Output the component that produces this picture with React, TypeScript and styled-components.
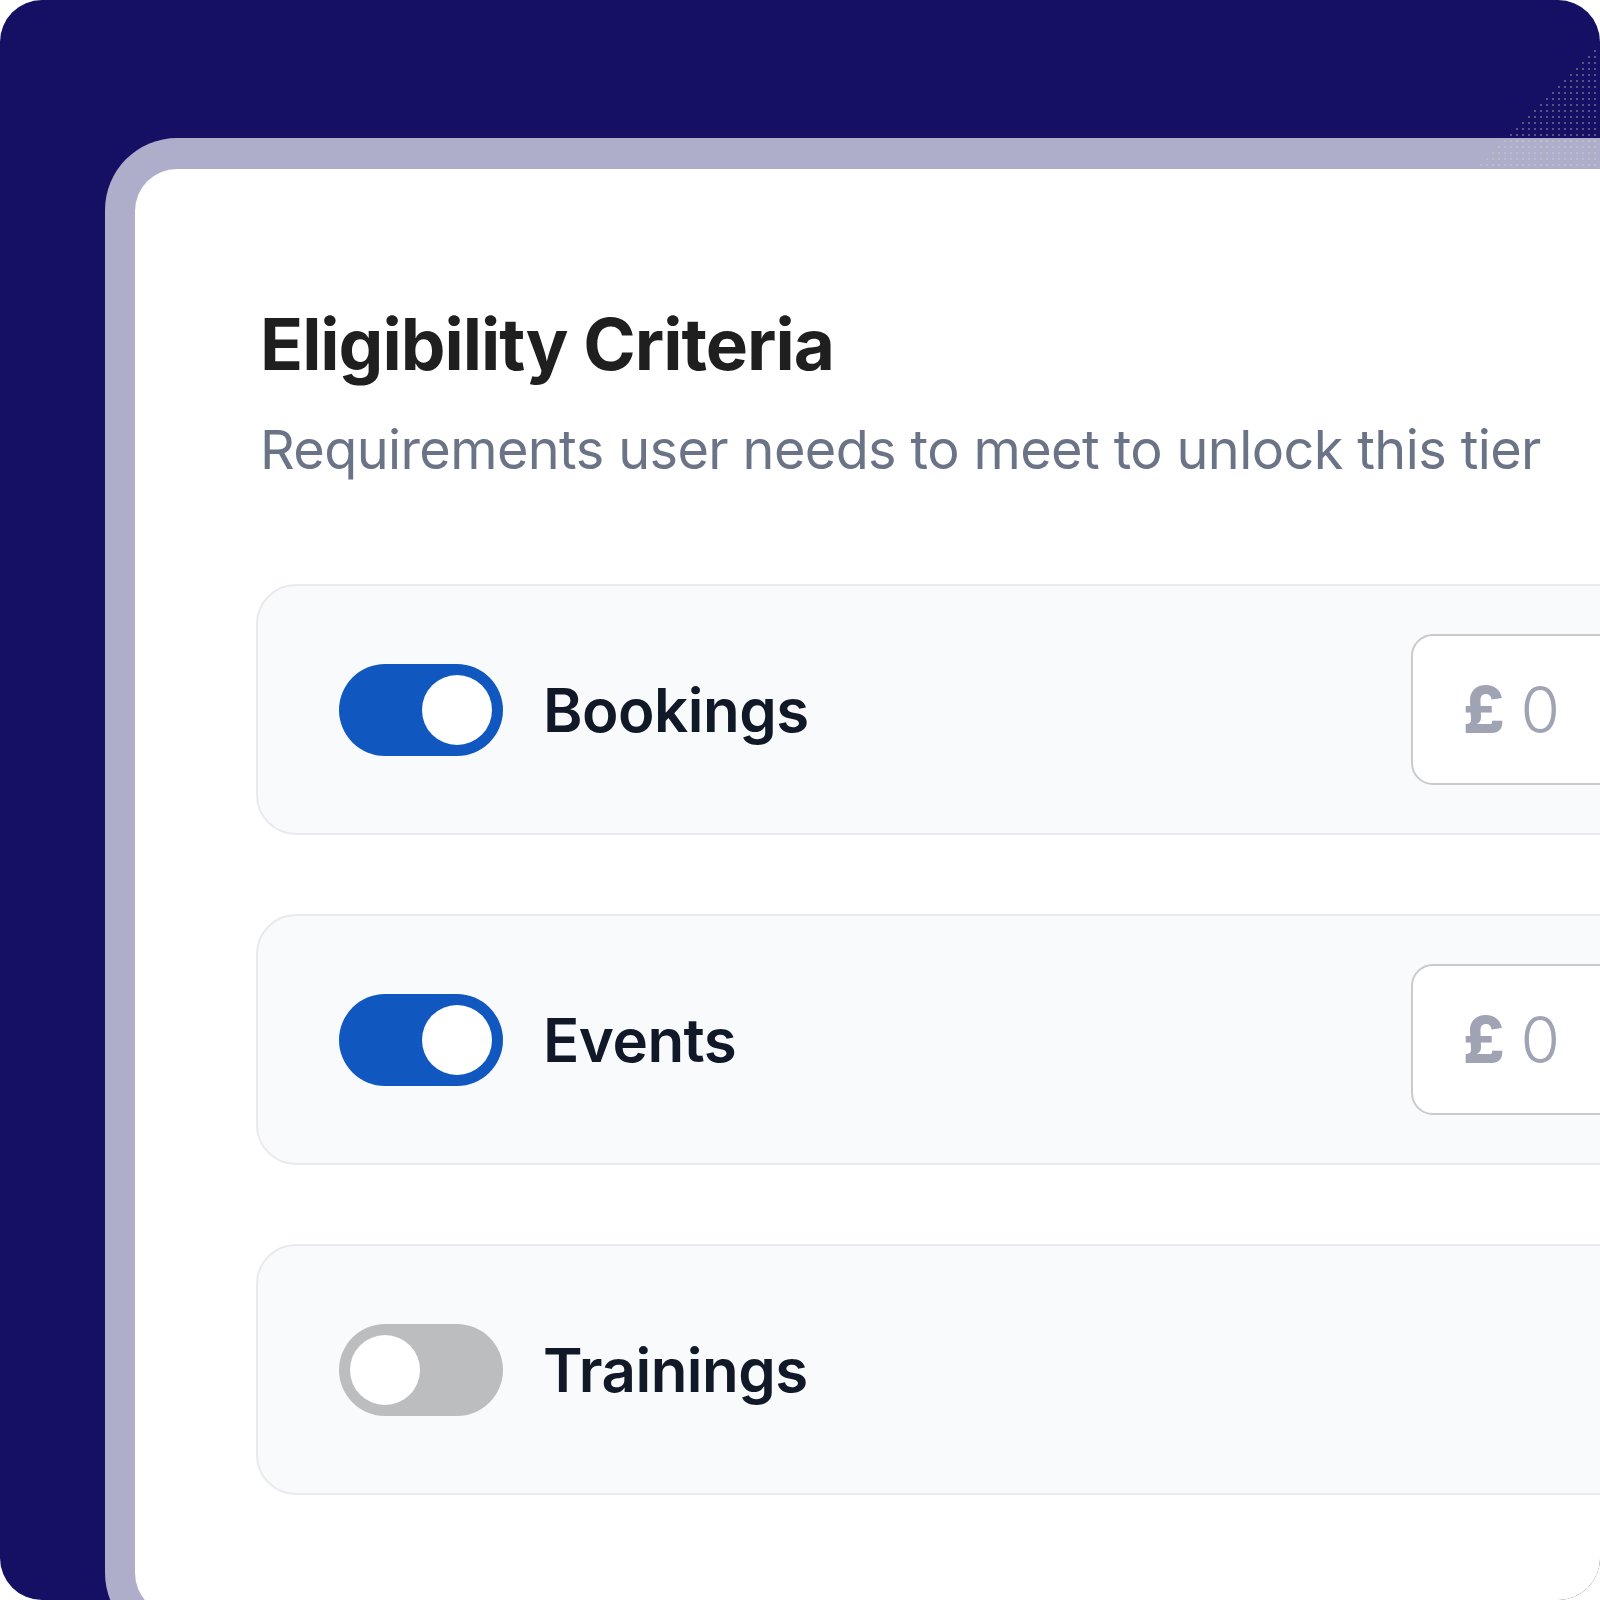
import styled, { createGlobalStyle } from 'styled-components';

const GlobalStyle = createGlobalStyle`
  html, body {
    margin: 0;
    padding: 0;
    background: #ffffff;
  }
  body {
    font-family: Inter, 'Noto Sans', 'Liberation Sans', sans-serif;
  }
`;

type Criterion = {
  label: string;
  enabled: boolean;
  amount?: string;
};

const criteria: Criterion[] = [
  { label: 'Bookings', enabled: true, amount: '0' },
  { label: 'Events', enabled: true, amount: '0' },
  { label: 'Trainings', enabled: false },
];

const App = () => {
  return (
    <>
      <GlobalStyle />
      <Canvas>
        <Frame>
          <Card>
            <Title>Eligibility Criteria</Title>
            <Subtitle>Requirements user needs to meet to unlock this tier</Subtitle>
            <RowList>
              {criteria.map((c) => (
                <CriterionRow key={c.label}>
                  <Track $on={c.enabled}>
                    <Knob />
                  </Track>
                  <Label>{c.label}</Label>
                  {c.amount !== undefined && (
                    <AmountBox>
                      <Currency>£</Currency>
                      <Amount>{c.amount}</Amount>
                    </AmountBox>
                  )}
                </CriterionRow>
              ))}
            </RowList>
          </Card>
        </Frame>
        <Sheen />
      </Canvas>
    </>
  );
};

export default App;

const Canvas = styled.div`
  position: relative;
  width: 1600px;
  height: 1600px;
  box-sizing: border-box;
  background: #151063;
  border-radius: 42px;
  overflow: hidden;
  display: flex;
  align-items: flex-start;
  padding: 138px 0 0 105px;
`;

const Frame = styled.div`
  flex: none;
  width: 1700px;
  height: 1507px;
  box-sizing: border-box;
  background: #aeaeca;
  border-radius: 72px;
  padding: 31px 0 30px 30px;
  display: flex;
`;

const Card = styled.div`
  flex: 1;
  background: #ffffff;
  border-radius: 42px;
  overflow: hidden;
  padding: 133px 0 0 121px;
  display: flex;
  flex-direction: column;
`;

const Title = styled.h1`
  margin: 0 0 0 4px;
  font-family: Inter, 'Noto Sans', sans-serif;
  font-size: 71px;
  font-weight: 700;
  line-height: 84px;
  letter-spacing: -1px;
  color: #1f1f1f;
`;

const Subtitle = styled.p`
  margin: 32px 0 0 4px;
  font-family: Inter, 'Noto Sans', sans-serif;
  font-size: 54px;
  font-weight: 400;
  line-height: 64px;
  letter-spacing: -0.6px;
  color: #6b7386;
  white-space: nowrap;
`;

const RowList = styled.div`
  margin-top: 102px;
  display: flex;
  flex-direction: column;
  gap: 79px;
`;

const CriterionRow = styled.div`
  width: 1500px;
  height: 251px;
  box-sizing: border-box;
  background: #f9fafc;
  border: 2px solid #e8eaee;
  border-radius: 40px;
  padding-left: 81px;
  display: flex;
  align-items: center;
`;

const Track = styled.div<{ $on: boolean }>`
  width: 164px;
  height: 92px;
  box-sizing: border-box;
  border-radius: 46px;
  padding: 11px;
  background: ${(p) => (p.$on ? '#1058c0' : '#bcbdbf')};
  display: flex;
  justify-content: ${(p) => (p.$on ? 'flex-end' : 'flex-start')};
  align-items: center;
`;

const Knob = styled.div`
  width: 70px;
  height: 70px;
  border-radius: 50%;
  background: #ffffff;
`;

const Label = styled.span`
  margin-left: 40px;
  font-family: Inter, 'Noto Sans', sans-serif;
  font-size: 60px;
  font-weight: 600;
  letter-spacing: -0.5px;
  color: #111827;
`;

const AmountBox = styled.div`
  margin-left: auto;
  margin-right: 103px;
  width: 240px;
  height: 151px;
  box-sizing: border-box;
  background: #ffffff;
  border: 2px solid #c9cacd;
  border-radius: 22px;
  padding-left: 50px;
  display: flex;
  align-items: center;
  gap: 16px;
  color: #9fa3b4;
  font-size: 64px;
`;

const Currency = styled.span`
  font-family: Inter, 'Noto Sans', sans-serif;
  font-weight: 800;
`;

const Amount = styled.span`
  font-family: Inter, 'Noto Sans', sans-serif;
  font-weight: 300;
`;

const Sheen = styled.div`
  position: absolute;
  top: 0;
  right: 0;
  width: 128px;
  height: 169px;
  clip-path: polygon(100% 25%, 100% 100%, 0 100%);
  background-image: radial-gradient(rgba(215, 215, 190, 0.35) 0.7px, transparent 1.1px);
  background-size: 6px 6px;
  pointer-events: none;
`;
